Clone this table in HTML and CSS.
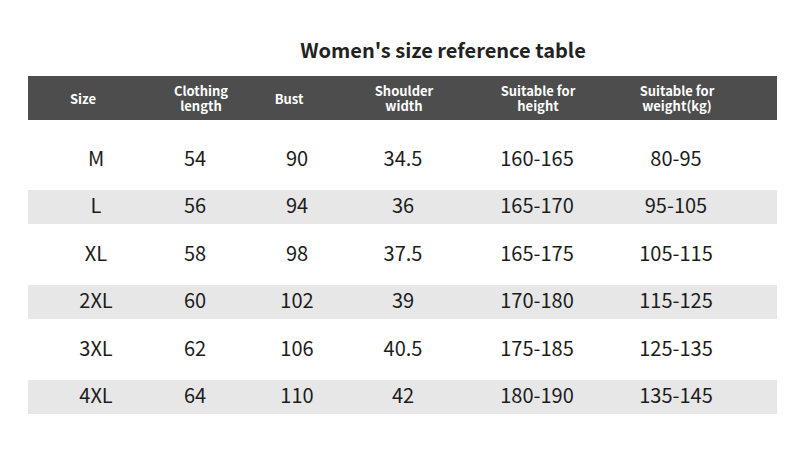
FILE: index.html
```html
<!DOCTYPE html>
<html>
<head>
<meta charset="utf-8">
<link rel="stylesheet" href="styles.css">
</head>
<body>
<div class="page">
  <h1 class="title">Women's size reference table</h1>
  <div class="table">
    <div class="head">
      <div>Size</div>
      <div>Clothing<br>length</div>
      <div>Bust</div>
      <div>Shoulder<br>width</div>
      <div>Suitable for<br>height</div>
      <div>Suitable for<br>weight(kg)</div>
    </div>
    <div class="row first"><div>M</div><div>54</div><div>90</div><div>34.5</div><div>160-165</div><div>80-95</div></div>
    <div class="row band"><div>L</div><div>56</div><div>94</div><div>36</div><div>165-170</div><div>95-105</div></div>
    <div class="row"><div>XL</div><div>58</div><div>98</div><div>37.5</div><div>165-175</div><div>105-115</div></div>
    <div class="row band"><div>2XL</div><div>60</div><div>102</div><div>39</div><div>170-180</div><div>115-125</div></div>
    <div class="row"><div>3XL</div><div>62</div><div>106</div><div>40.5</div><div>175-185</div><div>125-135</div></div>
    <div class="row band"><div>4XL</div><div>64</div><div>110</div><div>42</div><div>180-190</div><div>135-145</div></div>
  </div>
</div>
</body>
</html>
```
FILE: styles.css
```css
html, body {
  margin: 0;
  padding: 0;
  background: #ffffff;
}
.page {
  width: 790px;
  height: 463px;
  padding-top: 36px;
  box-sizing: border-box;
  font-family: "Noto Sans CJK SC", "Noto Sans", sans-serif;
}
.title {
  margin: 0;
  padding-left: 96px;
  text-align: center;
  font-size: 20px;
  line-height: 28px;
  font-weight: 700;
  color: #222222;
}
.table {
  margin: 12px 0 0 28px;
  width: 749px;
}
.head {
  display: grid;
  grid-template-columns: 110px 126px 50px 180px 88px 190px;
  height: 44px;
  background: #4d4d4d;
  color: #ffffff;
  font-size: 13px;
  line-height: 15px;
  font-weight: 700;
}
.head > div {
  display: flex;
  align-items: center;
  justify-content: center;
  text-align: center;
  white-space: nowrap;
}
.row {
  display: grid;
  grid-template-columns: 136px 62px 142px 70px 198px 80px;
  height: 61px;
  color: #1c1c1c;
  font-size: 20px;
  font-weight: 400;
}
.row.first {
  height: 61px;
  margin-top: 9px;
}
.row.band {
  height: 34px;
  background: #e7e7e7;
}
.row > div {
  display: flex;
  align-items: center;
  justify-content: center;
  padding-bottom: 5px;
  white-space: nowrap;
}
```
